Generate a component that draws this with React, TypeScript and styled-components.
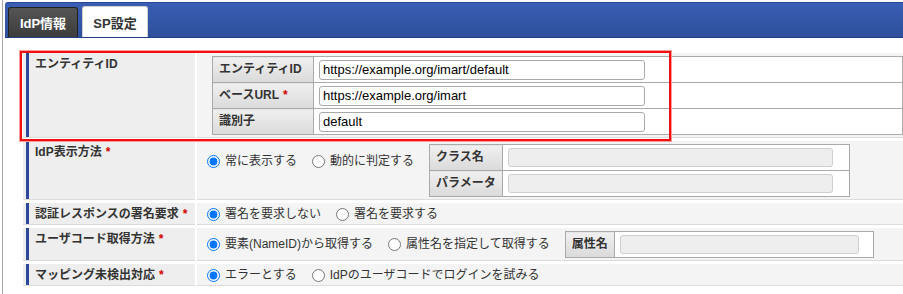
import React from 'react';
import styled, { createGlobalStyle } from 'styled-components';

const GlobalStyle = createGlobalStyle`
  html, body {
    margin: 0;
    padding: 0;
    background: #fff;
  }
  body {
    font-family: "Liberation Sans", "Noto Sans CJK JP", sans-serif;
    font-size: 12px;
    color: #333;
  }
`;

const Frame = styled.div`
  margin-left: 2px;
  border-left: 1px solid #a8a8a8;
  padding-top: 2px;
  min-height: 292px;
`;

const TabBar = styled.div`
  margin-left: 2px;
  height: 34px;
  display: flex;
  align-items: flex-end;
  gap: 4px;
  padding-left: 3px;
  background: linear-gradient(#3a5eb3, #2e4f9c);
  border-top: 1px solid #2a4795;
  border-bottom: 1px solid #223d85;
  border-radius: 3px 0 0 0;
`;

const Tab = styled.div<{ $active?: boolean }>`
  box-sizing: border-box;
  height: ${(p) => (p.$active ? '31px' : '30px')};
  width: ${(p) => (p.$active ? '66px' : '70px')};
  display: flex;
  align-items: center;
  justify-content: center;
  font-size: 13px;
  font-weight: bold;
  border-radius: 3px 3px 0 0;
  color: ${(p) => (p.$active ? '#333' : '#fff')};
  background: ${(p) => (p.$active ? '#fff' : 'linear-gradient(#555, #3c3c3c)')};
  border: 1px solid ${(p) => (p.$active ? '#d0d0d0' : '#222')};
  border-bottom: none;
`;

const Content = styled.div`
  padding: 15px 0 0 20px;
`;

const Form = styled.div`
  position: relative;
  display: grid;
  grid-template-columns: 172px 1fr;
  column-gap: 2px;
  row-gap: 3px;
`;

const Highlight = styled.div`
  position: absolute;
  left: -3px;
  top: -2px;
  width: 651px;
  height: 90px;
  box-sizing: border-box;
  border: 2px solid #f01010;
  box-shadow: 0 0 0 1px #ff9a9a;
  pointer-events: none;
`;

const Label = styled.div`
  box-sizing: border-box;
  padding: 4px 0 2px 12px;
  line-height: 15px;
  font-weight: bold;
  white-space: nowrap;
  color: #333;
  border-bottom: 1px solid #dcdcdc;
  background:
    linear-gradient(to right, transparent 3px, #2d4898 3px, #2d4898 6px, transparent 6px),
    #eeeeee;
`;

const Value = styled.div<{ $align?: string }>`
  box-sizing: border-box;
  padding: 3px 0 2px 10px;
  min-height: 21px;
  display: flex;
  align-items: ${(p) => p.$align || 'center'};
  background: #f4f4f4;
  border-bottom: 1px solid #dcdcdc;
  line-height: 15px;
`;

const Req = styled.span`
  color: #d40000;
  margin-left: 4px;
  font-weight: bold;
`;

const Radios = styled.div<{ $top?: number }>`
  display: flex;
  align-items: center;
  gap: 15px;
  margin-top: ${(p) => p.$top || 0}px;
  white-space: nowrap;
`;

const RadioItem = styled.label`
  display: flex;
  align-items: center;
  gap: 5px;
  color: #333;

  input {
    margin: 0;
    width: 13px;
    height: 13px;
  }
`;

const SubTable = styled.table<{ $ml: number; $width?: string }>`
  border-collapse: collapse;
  border: 1px solid #aaa;
  margin-left: ${(p) => p.$ml}px;
  width: ${(p) => p.$width || 'auto'};
  background: #fff;

  th {
    box-sizing: border-box;
    height: 26px;
    padding: 0 6px 0 6px;
    text-align: left;
    font-weight: bold;
    color: #333;
    white-space: nowrap;
    background: linear-gradient(#f0f0f0, #dadada);
    border: 1px solid #aaa;
  }
  td {
    padding: 0 0 0 5px;
    border: 1px solid #aaa;
    background: #fff;
  }
`;

const TextInput = styled.input<{ $w: number }>`
  box-sizing: border-box;
  display: block;
  width: ${(p) => p.$w}px;
  height: 20px;
  padding: 0 3px;
  border: 1px solid #a9a9a9;
  border-radius: 3px;
  font-family: "Liberation Sans", sans-serif;
  font-size: 13px;
  color: #000;
  background: #fff;
  outline: none;

  &:disabled {
    height: 19px;
    background: #eeeeee;
    border-color: #cfcfcf;
  }
`;

type Opt = { text: string; checked?: boolean };

const RadioGroup = ({ name, options, top }: { name: string; options: Opt[]; top?: number }) => (
  <Radios $top={top}>
    {options.map((o) => (
      <RadioItem key={o.text}>
        <input type="radio" name={name} defaultChecked={o.checked} />
        {o.text}
      </RadioItem>
    ))}
  </Radios>
);

const App: React.FC = () => {
  return (
    <Frame>
      <GlobalStyle />
      <TabBar>
        <Tab>IdP情報</Tab>
        <Tab $active>SP設定</Tab>
      </TabBar>
      <Content>
        <Form>
          <Highlight />

          <Label>エンティティID</Label>
          <Value $align="flex-start">
            <SubTable $ml={5} $width="100%">
              <tbody>
                <tr>
                  <th style={{ width: 101 }}>エンティティID</th>
                  <td>
                    <TextInput $w={326} defaultValue="https://example.org/imart/default" />
                  </td>
                </tr>
                <tr>
                  <th>
                    ベースURL<Req>*</Req>
                  </th>
                  <td>
                    <TextInput $w={326} defaultValue="https://example.org/imart" />
                  </td>
                </tr>
                <tr>
                  <th>識別子</th>
                  <td>
                    <TextInput $w={326} defaultValue="default" />
                  </td>
                </tr>
              </tbody>
            </SubTable>
          </Value>

          <Label>
            IdP表示方法<Req>*</Req>
          </Label>
          <Value $align="flex-start">
            <RadioGroup
              name="display"
              top={10}
              options={[{ text: '常に表示する', checked: true }, { text: '動的に判定する' }]}
            />
            <SubTable $ml={15}>
              <tbody>
                <tr>
                  <th>クラス名</th>
                  <td style={{ paddingRight: 16 }}>
                    <TextInput $w={325} disabled />
                  </td>
                </tr>
                <tr>
                  <th>パラメータ</th>
                  <td style={{ paddingRight: 16 }}>
                    <TextInput $w={325} disabled />
                  </td>
                </tr>
              </tbody>
            </SubTable>
          </Value>

          <Label>
            認証レスポンスの署名要求<Req>*</Req>
          </Label>
          <Value>
            <RadioGroup
              name="sign"
              options={[{ text: '署名を要求しない', checked: true }, { text: '署名を要求する' }]}
            />
          </Value>

          <Label>
            ユーザコード取得方法<Req>*</Req>
          </Label>
          <Value>
            <RadioGroup
              name="usercode"
              options={[{ text: '要素(NameID)から取得する', checked: true }, { text: '属性名を指定して取得する' }]}
            />
            <SubTable $ml={15}>
              <tbody>
                <tr>
                  <th>属性名</th>
                  <td style={{ paddingRight: 14 }}>
                    <TextInput $w={239} disabled />
                  </td>
                </tr>
              </tbody>
            </SubTable>
          </Value>

          <Label>
            マッピング未検出対応<Req>*</Req>
          </Label>
          <Value>
            <RadioGroup
              name="mapping"
              options={[{ text: 'エラーとする', checked: true }, { text: 'IdPのユーザコードでログインを試みる' }]}
            />
          </Value>
        </Form>
      </Content>
    </Frame>
  );
};

export default App;
